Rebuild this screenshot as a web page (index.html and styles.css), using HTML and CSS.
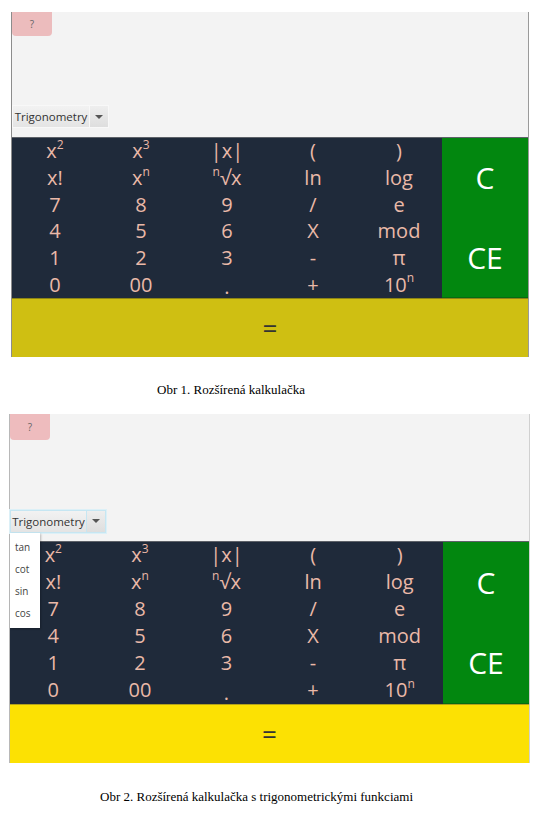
FILE: index.html
```html
<!DOCTYPE html>
<html>
<head>
<meta charset="utf-8">
<link rel="stylesheet" href="styles.css">
</head>
<body>
<div class="calc calc-one">
  <div class="panel">
    <div class="help">?</div>
    <div class="combo">
      <div class="combo-text">Trigonometry</div>
      <div class="combo-arrow"><span class="tri"></span></div>
    </div>
  </div>
  <div class="keys">
    <div class="grid">
      <span>x<sup>2</sup></span><span>x<sup>3</sup></span><span>|x|</span><span>(</span><span>)</span>
      <span>x!</span><span>x<sup>n</sup></span><span><sup>n</sup>√x</span><span>ln</span><span>log</span>
      <span>7</span><span>8</span><span>9</span><span>/</span><span>e</span>
      <span>4</span><span>5</span><span>6</span><span>X</span><span>mod</span>
      <span>1</span><span>2</span><span>3</span><span>-</span><span>π</span>
      <span>0</span><span>00</span><span class="dot">.</span><span>+</span><span>10<sup>n</sup></span>
    </div>
    <div class="clear"><span>C</span><span>CE</span></div>
  </div>
  <div class="equals">=</div>
</div>
<p class="caption caption-one">Obr 1. Rozšírená kalkulačka</p>

<div class="calc calc-two">
  <div class="panel">
    <div class="help">?</div>
    <div class="combo focused">
      <div class="combo-text">Trigonometry</div>
      <div class="combo-arrow"><span class="tri"></span></div>
      <ul class="menu">
        <li>tan</li><li>cot</li><li>sin</li><li>cos</li>
      </ul>
    </div>
  </div>
  <div class="keys">
    <div class="grid">
      <span>x<sup>2</sup></span><span>x<sup>3</sup></span><span>|x|</span><span>(</span><span>)</span>
      <span>x!</span><span>x<sup>n</sup></span><span><sup>n</sup>√x</span><span>ln</span><span>log</span>
      <span>7</span><span>8</span><span>9</span><span>/</span><span>e</span>
      <span>4</span><span>5</span><span>6</span><span>X</span><span>mod</span>
      <span>1</span><span>2</span><span>3</span><span>-</span><span>π</span>
      <span>0</span><span>00</span><span class="dot">.</span><span>+</span><span>10<sup>n</sup></span>
    </div>
    <div class="clear"><span>C</span><span>CE</span></div>
  </div>
  <div class="equals">=</div>
</div>
<p class="caption caption-two">Obr 2. Rozšírená kalkulačka s trigonometrickými funkciami</p>
</body>
</html>
```
FILE: styles.css
```css
html, body {
  margin: 0;
  padding: 0;
  background: #ffffff;
}

body {
  width: 544px;
  font-family: "Open Sans", "Noto Sans", sans-serif;
}

.calc {
  display: flex;
  flex-direction: column;
  background: #f3f3f3;
}

.calc-one {
  margin: 12px 0 0 11px;
  width: 516px;
  border-left: 1px solid #8c8c8c;
  border-right: 1px solid #9a9a9a;
}

.calc-two {
  margin: 16px 0 0 9px;
  width: 519px;
  border-left: 1px solid #b8b8b8;
  border-right: 1px solid #d0d0d0;
}

.panel {
  display: flex;
  flex-direction: column;
  align-items: flex-start;
  height: 125px;
  border-bottom: 1px solid #5d6168;
}

.calc-two .panel {
  height: 127px;
}

.help {
  width: 40px;
  height: 24px;
  background: #ecbcbd;
  border-radius: 0 0 4px 4px;
  color: #666;
  font-size: 10px;
  line-height: 24px;
  text-align: center;
}

.calc-two .help {
  height: 26px;
  line-height: 26px;
  background: #eebcbe;
}

.combo {
  position: relative;
  margin-top: auto;
  margin-bottom: 9px;
  display: flex;
  height: 21px;
  border: 1px solid #f8f8f8;
}

.combo.focused {
  height: 21px;
  margin-bottom: 8px;
  border: 1px solid #c6e6f2;
  box-shadow: 0 0 0 1px #dcf0f7;
}

.combo-text {
  width: 76px;
  height: 21px;
  background: linear-gradient(#f2f2f2, #e4e4e4);
  border-right: 1px solid #f8f8f8;
  color: #333;
  font-size: 11.5px;
  line-height: 21px;
  text-align: center;
}

.combo.focused .combo-text {
  width: 75px;
  border-right: 1px solid #c6e6f2;
}

.combo-arrow {
  width: 18px;
  height: 21px;
  background: linear-gradient(#eeeeee, #dedede);
  display: flex;
  align-items: center;
  justify-content: center;
}

.tri {
  width: 0;
  height: 0;
  border-left: 4px solid transparent;
  border-right: 4px solid transparent;
  border-top: 4px solid #555;
}

.menu {
  position: absolute;
  left: -1px;
  top: 22px;
  z-index: 2;
  margin: 0;
  padding: 3px 0 4px;
  width: 30px;
  list-style: none;
  background: #ffffff;
  box-shadow: 1px 1px 2px rgba(0, 0, 0, 0.25);
}

.menu li {
  padding-left: 5px;
  height: 22px;
  line-height: 22px;
  font-size: 10px;
  color: #444;
}

.keys {
  display: flex;
  background: #1f2a3a;
}

.grid {
  width: 430px;
  display: grid;
  grid-template-columns: repeat(5, 86px);
  grid-auto-rows: 26.67px;
}

.calc-two .grid {
  width: 433px;
  grid-template-columns: repeat(5, 86.6px);
  grid-auto-rows: 27px;
}

.grid span {
  display: flex;
  align-items: center;
  justify-content: center;
  color: #eab9a8;
  font-size: 20px;
  line-height: 1;
}

.grid span.dot {
  align-items: flex-end;
  padding-bottom: 1px;
}

.grid sup {
  font-size: 12px;
  align-self: flex-start;
  margin-top: 1px;
  line-height: 1;
}

.clear {
  flex: 1;
  display: flex;
  flex-direction: column;
  background: #02870f;
  border-bottom: 1px solid #056b12;
}

.clear span {
  flex: 1;
  display: flex;
  align-items: center;
  justify-content: center;
  color: #ffffff;
  font-size: 30px;
}

.equals {
  height: 58px;
  display: flex;
  align-items: center;
  justify-content: center;
  font-size: 26px;
  color: #333;
  background: #cfbf12;
  border-top: 1px solid #8d8515;
}

.calc-two .equals {
  background: #fce103;
  border-top: 1px solid #b3a21a;
}

.caption {
  margin: 0;
  font-family: "Liberation Serif", "Times New Roman", serif;
  font-size: 13px;
  line-height: 16px;
  color: #000;
}

.caption-one {
  margin-top: 25px;
  padding-left: 157px;
}

.caption-two {
  margin-top: 26px;
  padding-left: 100px;
}
```
